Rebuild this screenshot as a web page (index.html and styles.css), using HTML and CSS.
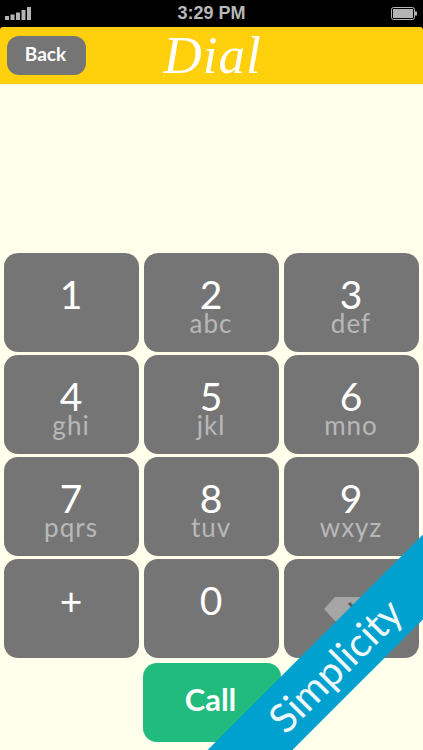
FILE: index.html
```html
<!DOCTYPE html>
<html lang="en">
<head>
<meta charset="utf-8">
<title>Dial</title>
<link rel="stylesheet" href="styles.css">
</head>
<body>
<div class="screen">
  <div class="status">
    <svg class="signal" width="27" height="14" viewBox="0 0 27 14"><g fill="#b4b4b4"><rect x="0" y="9" width="4" height="4"/><rect x="5.500" y="7.500" width="4" height="5.500"/><rect x="11" y="5.500" width="4" height="7.500"/><rect x="16.500" y="3" width="4" height="10"/><rect x="22" y="0" width="4" height="13"/></g></svg>
    <div class="time">3:29 PM</div>
    <svg class="battery" width="27" height="14" viewBox="0 0 27 14"><rect x="0.500" y="0.500" width="23" height="12" rx="2" fill="none" stroke="#b4b4b4"/><rect x="2" y="2" width="20" height="9" fill="#b4b4b4"/><rect x="24" y="4.500" width="2" height="4" fill="#b4b4b4"/></svg>
  </div>
  <header class="header">
    <button class="back">Back</button>
    <h1 class="title">Dial</h1>
  </header>
  <main class="main">
    <div class="keypad">
      <div class="key"><span class="digit">1</span></div>
      <div class="key"><span class="digit">2</span><span class="letters">abc</span></div>
      <div class="key"><span class="digit">3</span><span class="letters">def</span></div>
      <div class="key"><span class="digit">4</span><span class="letters">ghi</span></div>
      <div class="key"><span class="digit">5</span><span class="letters">jkl</span></div>
      <div class="key"><span class="digit">6</span><span class="letters">mno</span></div>
      <div class="key"><span class="digit">7</span><span class="letters">pqrs</span></div>
      <div class="key"><span class="digit">8</span><span class="letters">tuv</span></div>
      <div class="key"><span class="digit">9</span><span class="letters">wxyz</span></div>
      <div class="key"><span class="digit">+</span></div>
      <div class="key"><span class="digit">0</span></div>
      <div class="key key-icon">
        <svg width="58" height="26" viewBox="0 0 58 26"><path d="M12 1H54a3 3 0 0 1 3 3V22a3 3 0 0 1-3 3H12L1 13Z" fill="#a6a6a6"/><path d="M26 7L38 19M38 7L26 19" stroke="#5a5a5a" stroke-width="3"/></svg>
      </div>
    </div>
    <button class="call">Call</button>
  </main>
  <div class="ribbon">Simplicity</div>
</div>
</body>
</html>
```

FILE: styles.css
```css
* { box-sizing: border-box; }
html, body { margin: 0; padding: 0; }
body { width: 423px; height: 750px; overflow: hidden; background: #000; font-family: Lato, "Open Sans", sans-serif; }
.screen { position: relative; width: 423px; height: 750px; overflow: hidden; display: flex; flex-direction: column; }
.status { flex: 0 0 27px; background: #000; display: grid; grid-template-columns: 1fr auto 1fr; align-items: center; padding: 0 5px; }
.signal { justify-self: start; }
.time { font-family: "Liberation Sans", Arial, sans-serif; font-weight: 700; font-size: 18px; line-height: 27px; color: #b8b8b8; }
.battery { justify-self: end; margin-top: 1px; }
.header { flex: 0 0 57px; position: relative; background: #ffd00b; border-radius: 3px 3px 0 0; display: flex; align-items: center; justify-content: center; }
.back { position: absolute; left: 7px; top: 9px; width: 79px; height: 39px; border: 0; border-radius: 12px; background: #757575; color: #fff; font-family: Lato, sans-serif; font-weight: 700; font-size: 19px; padding: 0 2px 4px 0; }
.title { margin: 0 0 0 2px; font-family: "Liberation Serif", serif; font-style: italic; font-weight: 400; font-size: 53px; line-height: 57px; color: #fff; letter-spacing: 1px; }
.main { flex: 1; background: #ffffec; padding: 169px 4px 0; display: flex; flex-direction: column; }
.keypad { display: grid; grid-template-columns: repeat(3, 135px); grid-auto-rows: 99px; column-gap: 5px; row-gap: 3px; }
.key { background: #757575; border-radius: 14px; display: flex; flex-direction: column; align-items: center; color: #fff; padding-top: 23px; }
.key-icon { justify-content: center; padding-top: 0; }
.digit { font-size: 39px; line-height: 36px; font-weight: 400; height: 36px; margin-left: -1px; }
.letters { font-size: 26px; line-height: 23px; letter-spacing: 1px; color: #b8b8b8; margin-left: -1px; }
.call { align-self: flex-start; margin: 5px 0 0 139px; width: 138px; height: 79px; border: 0; border-radius: 14px; background: #21bb7d; color: #fff; font-family: Lato, sans-serif; font-weight: 700; font-size: 31px; padding: 0 3px 8px 0; }
.ribbon { position: absolute; left: 135px; top: 635px; width: 400px; height: 60px; background: #00a0cf; color: #eef9fc; font-size: 40px; font-weight: 400; line-height: 60px; text-align: center; transform: rotate(-45deg); }
```
